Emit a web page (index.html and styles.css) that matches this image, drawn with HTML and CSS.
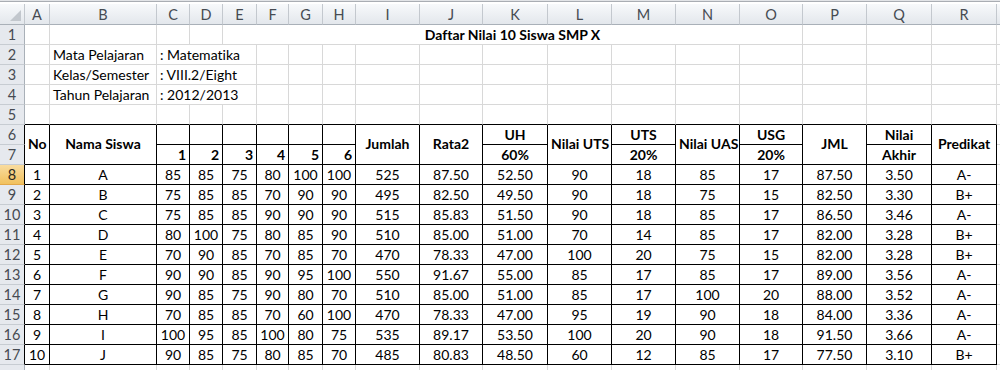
FILE: index.html
```html
<!DOCTYPE html>
<html lang="id">
<head>
<meta charset="utf-8">
<title>Daftar Nilai 10 Siswa SMP X</title>
<link rel="stylesheet" href="styles.css">
</head>
<body>
<div class="topbar"></div>
<table class="sheet">
<colgroup>
<col class="w25"><col class="w25"><col class="w107"><col class="w33"><col class="w33"><col class="w34"><col class="w32"><col class="w34"><col class="w33"><col class="w64"><col class="w63"><col class="w65"><col class="w64"><col class="w64"><col class="w64"><col class="w63"><col class="w64"><col class="w65"><col class="w65"><col class="w3">
</colgroup>
<tbody>
<tr class="hdr">
<td class="corner"><span class="tri"></span></td><td class="ch">A</td><td class="ch">B</td><td class="ch">C</td><td class="ch">D</td><td class="ch">E</td><td class="ch">F</td><td class="ch">G</td><td class="ch">H</td><td class="ch">I</td><td class="ch">J</td><td class="ch">K</td><td class="ch">L</td><td class="ch">M</td><td class="ch">N</td><td class="ch">O</td><td class="ch">P</td><td class="ch">Q</td><td class="ch">R</td><td class="ch end"></td>
</tr>
<tr>
<td class="rh">1</td><td></td><td></td><td></td><td></td><td colspan="11" class="title">Daftar Nilai 10 Siswa SMP X</td><td></td><td></td><td></td><td class="end"></td>
</tr>
<tr>
<td class="rh">2</td><td></td><td class="l">Mata Pelajaran</td><td colspan="3" class="l">: Matematika</td><td></td><td></td><td></td><td></td><td></td><td></td><td></td><td></td><td></td><td></td><td></td><td></td><td></td><td class="end"></td>
</tr>
<tr>
<td class="rh">3</td><td></td><td class="l">Kelas/Semester</td><td colspan="3" class="l">: VIII.2/Eight</td><td></td><td></td><td></td><td></td><td></td><td></td><td></td><td></td><td></td><td></td><td></td><td></td><td></td><td class="end"></td>
</tr>
<tr>
<td class="rh">4</td><td></td><td class="l">Tahun Pelajaran</td><td colspan="3" class="l">: 2012/2013</td><td></td><td></td><td></td><td></td><td></td><td></td><td></td><td></td><td></td><td></td><td></td><td></td><td></td><td class="end"></td>
</tr>
<tr class="above">
<td class="rh">5</td><td></td><td></td><td></td><td></td><td></td><td></td><td></td><td></td><td></td><td></td><td></td><td></td><td></td><td></td><td></td><td></td><td></td><td></td><td class="end"></td>
</tr>
<tr class="tb th">
<td class="rh">6</td><td rowspan="2" class="m">No</td><td rowspan="2" class="m">Nama Siswa</td><td></td><td></td><td></td><td></td><td></td><td></td><td rowspan="2" class="m">Jumlah</td><td rowspan="2" class="m">Rata2</td><td>UH</td><td rowspan="2" class="m">Nilai UTS</td><td>UTS</td><td rowspan="2" class="m">Nilai UAS</td><td>USG</td><td rowspan="2" class="m">JML</td><td>Nilai</td><td rowspan="2" class="m">Predikat</td><td class="end"></td>
</tr>
<tr class="tb th">
<td class="rh">7</td><td class="r">1</td><td class="r">2</td><td class="r">3</td><td class="r">4</td><td class="r">5</td><td class="r">6</td><td>60%</td><td>20%</td><td>20%</td><td>Akhir</td><td class="end"></td>
</tr>
<tr class="tb">
<td class="rh sel">8</td><td>1</td><td>A</td><td>85</td><td>85</td><td>75</td><td>80</td><td>100</td><td>100</td><td>525</td><td>87.50</td><td>52.50</td><td>90</td><td>18</td><td>85</td><td>17</td><td>87.50</td><td>3.50</td><td>A-</td><td class="end"></td>
</tr>
<tr class="tb">
<td class="rh">9</td><td>2</td><td>B</td><td>75</td><td>85</td><td>85</td><td>70</td><td>90</td><td>90</td><td>495</td><td>82.50</td><td>49.50</td><td>90</td><td>18</td><td>75</td><td>15</td><td>82.50</td><td>3.30</td><td>B+</td><td class="end"></td>
</tr>
<tr class="tb">
<td class="rh">10</td><td>3</td><td>C</td><td>75</td><td>85</td><td>85</td><td>90</td><td>90</td><td>90</td><td>515</td><td>85.83</td><td>51.50</td><td>90</td><td>18</td><td>85</td><td>17</td><td>86.50</td><td>3.46</td><td>A-</td><td class="end"></td>
</tr>
<tr class="tb">
<td class="rh">11</td><td>4</td><td>D</td><td>80</td><td>100</td><td>75</td><td>80</td><td>85</td><td>90</td><td>510</td><td>85.00</td><td>51.00</td><td>70</td><td>14</td><td>85</td><td>17</td><td>82.00</td><td>3.28</td><td>B+</td><td class="end"></td>
</tr>
<tr class="tb">
<td class="rh">12</td><td>5</td><td>E</td><td>70</td><td>90</td><td>85</td><td>70</td><td>85</td><td>70</td><td>470</td><td>78.33</td><td>47.00</td><td>100</td><td>20</td><td>75</td><td>15</td><td>82.00</td><td>3.28</td><td>B+</td><td class="end"></td>
</tr>
<tr class="tb">
<td class="rh">13</td><td>6</td><td>F</td><td>90</td><td>90</td><td>85</td><td>90</td><td>95</td><td>100</td><td>550</td><td>91.67</td><td>55.00</td><td>85</td><td>17</td><td>85</td><td>17</td><td>89.00</td><td>3.56</td><td>A-</td><td class="end"></td>
</tr>
<tr class="tb">
<td class="rh">14</td><td>7</td><td>G</td><td>90</td><td>85</td><td>75</td><td>90</td><td>80</td><td>70</td><td>510</td><td>85.00</td><td>51.00</td><td>85</td><td>17</td><td>100</td><td>20</td><td>88.00</td><td>3.52</td><td>A-</td><td class="end"></td>
</tr>
<tr class="tb">
<td class="rh">15</td><td>8</td><td>H</td><td>70</td><td>85</td><td>85</td><td>70</td><td>60</td><td>100</td><td>470</td><td>78.33</td><td>47.00</td><td>95</td><td>19</td><td>90</td><td>18</td><td>84.00</td><td>3.36</td><td>A-</td><td class="end"></td>
</tr>
<tr class="tb">
<td class="rh">16</td><td>9</td><td>I</td><td>100</td><td>95</td><td>85</td><td>100</td><td>80</td><td>75</td><td>535</td><td>89.17</td><td>53.50</td><td>100</td><td>20</td><td>90</td><td>18</td><td>91.50</td><td>3.66</td><td>A-</td><td class="end"></td>
</tr>
<tr class="tb">
<td class="rh">17</td><td>10</td><td>J</td><td>90</td><td>85</td><td>75</td><td>80</td><td>85</td><td>70</td><td>485</td><td>80.83</td><td>48.50</td><td>60</td><td>12</td><td>85</td><td>17</td><td>77.50</td><td>3.10</td><td>B+</td><td class="end"></td>
</tr>
<tr>
<td class="rh"></td><td></td><td></td><td></td><td></td><td></td><td></td><td></td><td></td><td></td><td></td><td></td><td></td><td></td><td></td><td></td><td></td><td></td><td></td><td class="end"></td>
</tr>
</tbody>
</table>
</body>
</html>
```
FILE: styles.css
```css
html, body {
  margin: 0;
  padding: 0;
  background: #ffffff;
}

body {
  width: 1000px;
  height: 370px;
  overflow: hidden;
  font-family: Lato, "Open Sans", "Liberation Sans", sans-serif;
  font-size: 14px;
  font-variant-ligatures: none;
  color: #000000;
}

.topbar {
  height: 1px;
  background: #e2e4e7;
  border-bottom: 1px solid #a9adb3;
  margin-bottom: 2px;
}

.sheet {
  border-collapse: separate;
  border-spacing: 0;
  table-layout: fixed;
  width: 1000px;
}

.w3 { width: 3px; }
.w25 { width: 25px; }
.w32 { width: 32px; }
.w33 { width: 33px; }
.w34 { width: 34px; }
.w63 { width: 63px; }
.w64 { width: 64px; }
.w65 { width: 65px; }
.w107 { width: 107px; }

.sheet td {
  box-sizing: border-box;
  height: 20px;
  padding: 0 3px 1px;
  border-right: 1px solid #d8d8d8;
  border-bottom: 1px solid #d8d8d8;
  white-space: nowrap;
  overflow: hidden;
  vertical-align: bottom;
  line-height: 17px;
  text-align: center;
}

.sheet td.end {
  border-right: none;
  padding: 0;
}

/* column header row */
.hdr td {
  height: 21px;
  background: linear-gradient(#f7f9fb, #e3e7ec);
  color: #464b52;
  font-size: 14.5px;
  border-right-color: #c3c8ce;
  border-bottom-color: #a9b0b8;
  vertical-align: middle;
  padding: 0;
}

.hdr td.corner {
  text-align: right;
  vertical-align: bottom;
  padding: 0 3px 3px 0;
  line-height: 0;
}

.tri {
  display: inline-block;
  width: 0;
  height: 0;
  border-left: 11px solid transparent;
  border-bottom: 11px solid #c2c7cd;
}

/* row headers */
.sheet td.rh {
  background: #e6e9ee;
  color: #464b52;
  font-size: 14.5px;
  border-right-color: #a9b0b8;
  border-bottom-color: #c7ccd2;
  padding: 0;
  vertical-align: middle;
}

.sheet td.rh.sel {
  background: linear-gradient(#f9dc9f, #f1c15e);
  color: #2e2a20;
  border-bottom-color: #e2a84a;
}

/* content */
.sheet td.l { text-align: left; }
.sheet td.r { text-align: right; }
.sheet td.m { vertical-align: middle; padding-bottom: 2px; }

.title {
  font-weight: bold;
}

.above td {
  border-bottom-color: #000000;
}

.above td.rh {
  border-bottom-color: #c7ccd2;
}

.above td.end {
  border-bottom-color: #d8d8d8;
}

.tb td {
  border-right-color: #000000;
  border-bottom-color: #000000;
}

.tb td.rh {
  border-right-color: #000000;
  border-bottom-color: #c7ccd2;
}

.tb td.rh.sel {
  border-bottom-color: #e2a84a;
}

.tb td.end {
  border-bottom-color: #d8d8d8;
}

.th td {
  font-weight: bold;
}

.th td.rh {
  font-weight: normal;
}
```
